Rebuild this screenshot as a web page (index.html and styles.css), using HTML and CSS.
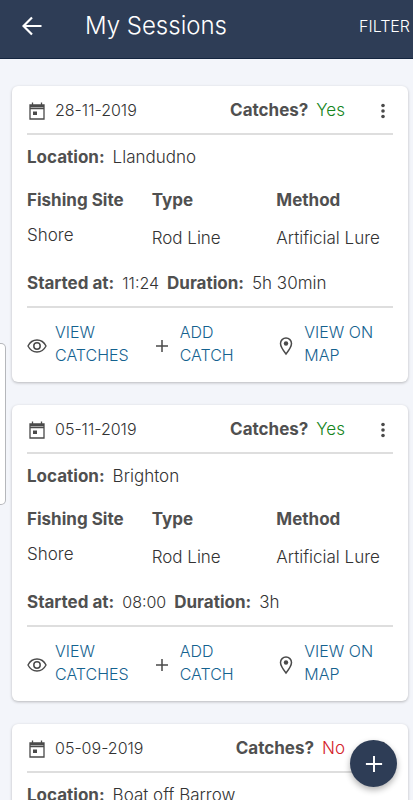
FILE: index.html
```html
<!DOCTYPE html>
<html lang="en">
<head>
<meta charset="utf-8">
<meta name="viewport" content="width=device-width, initial-scale=1">
<title>My Sessions</title>
<link rel="stylesheet" href="styles.css">
</head>
<body>
<svg class="sprite" aria-hidden="true">
  <symbol id="calendar" viewBox="0 0 20 20"><path d="M3 4h14v14H3zM3 5.500h14M3 7.500h14M5.500 1.500V5M14.500 1.500V5" fill="none" stroke="currentColor" stroke-width="1.300"/><path d="M6 10.500h4v3.500H6z" fill="currentColor"/></symbol>
  <symbol id="eye" viewBox="0 0 20 20"><path d="M1 10C3 6 6.300 4 10 4s7 2 9 6c-2 4-5.300 6-9 6s-7-2-9-6z" fill="none" stroke="currentColor" stroke-width="1.400"/><circle cx="10" cy="10" r="3.200" fill="none" stroke="currentColor" stroke-width="1.500"/></symbol>
  <symbol id="plus" viewBox="0 0 20 20"><path d="M10 4v12M4 10h12" fill="none" stroke="currentColor" stroke-width="1.500"/></symbol>
  <symbol id="pin" viewBox="0 0 20 20"><path d="M10 18C7 14.200 4.500 11 4.500 7.500a5.500 5.500 0 0 1 11 0C15.500 11 13 14.200 10 18z" fill="none" stroke="currentColor" stroke-width="1.500"/><circle cx="10" cy="7.500" r="2.200" fill="currentColor"/></symbol>
  <symbol id="dots" viewBox="0 0 20 20"><g fill="currentColor"><circle cx="10" cy="4.500" r="1.800"/><circle cx="10" cy="10" r="1.800"/><circle cx="10" cy="15.500" r="1.800"/></g></symbol>
</svg>

<header class="topbar">
  <button class="back" aria-label="Back"><svg viewBox="0 0 20 20"><path d="M19.500 10H2M10 1.500L1.500 10l8.500 8.500" fill="none" stroke="currentColor" stroke-width="2.200"/></svg></button>
  <h1>My Sessions</h1>
  <button class="filter">FILTER</button>
</header>

<main class="sessions">
  <article class="card">
    <div class="card-head">
      <svg class="icon"><use href="#calendar"/></svg>
      <time datetime="2019-11-28">28-11-2019</time>
      <p class="catches"><b>Catches?</b><span class="yes">Yes</span></p>
      <button class="more" aria-label="More options"><svg class="icon"><use href="#dots"/></svg></button>
    </div>
    <p class="line location"><b>Location:</b><span>Llandudno</span></p>
    <dl class="details">
      <div class="site"><dt>Fishing Site</dt><dd>Shore</dd></div>
      <div><dt>Type</dt><dd>Rod Line</dd></div>
      <div><dt>Method</dt><dd>Artificial Lure</dd></div>
    </dl>
    <p class="line times"><b>Started at:</b><time>11:24</time><b>Duration:</b><span>5h 30min</span></p>
    <nav class="actions">
      <a href="#"><svg class="icon"><use href="#eye"/></svg><span>VIEW<br>CATCHES</span></a>
      <a href="#"><svg class="icon"><use href="#plus"/></svg><span>ADD<br>CATCH</span></a>
      <a href="#"><svg class="icon"><use href="#pin"/></svg><span>VIEW ON<br>MAP</span></a>
    </nav>
  </article>

  <article class="card">
    <div class="card-head">
      <svg class="icon"><use href="#calendar"/></svg>
      <time datetime="2019-11-05">05-11-2019</time>
      <p class="catches"><b>Catches?</b><span class="yes">Yes</span></p>
      <button class="more" aria-label="More options"><svg class="icon"><use href="#dots"/></svg></button>
    </div>
    <p class="line location"><b>Location:</b><span>Brighton</span></p>
    <dl class="details">
      <div class="site"><dt>Fishing Site</dt><dd>Shore</dd></div>
      <div><dt>Type</dt><dd>Rod Line</dd></div>
      <div><dt>Method</dt><dd>Artificial Lure</dd></div>
    </dl>
    <p class="line times"><b>Started at:</b><time>08:00</time><b>Duration:</b><span>3h</span></p>
    <nav class="actions">
      <a href="#"><svg class="icon"><use href="#eye"/></svg><span>VIEW<br>CATCHES</span></a>
      <a href="#"><svg class="icon"><use href="#plus"/></svg><span>ADD<br>CATCH</span></a>
      <a href="#"><svg class="icon"><use href="#pin"/></svg><span>VIEW ON<br>MAP</span></a>
    </nav>
  </article>

  <article class="card">
    <div class="card-head">
      <svg class="icon"><use href="#calendar"/></svg>
      <time datetime="2019-09-05">05-09-2019</time>
      <p class="catches"><b>Catches?</b><span class="no">No</span></p>
      <button class="more" aria-label="More options"><svg class="icon"><use href="#dots"/></svg></button>
    </div>
    <p class="line location"><b>Location:</b><span>Boat off Barrow</span></p>
  </article>
</main>

<div class="edge-handle"></div>
<button class="fab" aria-label="Add session"><svg viewBox="0 0 20 20"><path d="M10 1v18M1 10h18" fill="none" stroke="currentColor" stroke-width="2.200"/></svg></button>
</body>
</html>
```
FILE: styles.css
```css
* { box-sizing: border-box; }

html { scrollbar-width: none; }

body {
  margin: 0;
  background: #f3f5fa;
  color: #333;
  font: 300 17px/24px Inter, sans-serif;
}

h1, p, dl, dd { margin: 0; }

b, dt { font-weight: 700; color: #505050; }

time { font-size: 16px; }

button {
  padding: 0;
  border: 0;
  background: none;
  color: inherit;
  font: inherit;
}

.sprite { position: absolute; width: 0; height: 0; }

.icon {
  display: block;
  flex: none;
  width: 20px;
  height: 20px;
  color: #4a4a4a;
}

.topbar {
  position: sticky;
  top: 0;
  z-index: 2;
  display: flex;
  align-items: center;
  height: 59px;
  padding: 0 3px 6px 22px;
  border-bottom: 1px solid #14253f;
  background: #2e3d56;
  color: #fff;
}

.back svg { display: block; width: 20px; height: 20px; }

.topbar h1 {
  flex: 1;
  margin-left: 43px;
  font-size: 24px;
  font-weight: 300;
  line-height: 28px;
}

.filter { font-size: 16px; }

.sessions {
  display: flex;
  flex-direction: column;
  gap: 23px;
  padding: 27px 5px 24px 12px;
}

.card {
  padding: 0 15px 15px;
  border-radius: 6px;
  background: #fff;
  box-shadow: 0 1px 3px rgba(0, 0, 0, 0.25);
}

.card-head {
  display: flex;
  align-items: center;
  gap: 8px;
  height: 49px;
  border-bottom: 2px solid #dedede;
}
.card-head .icon { margin-top: 3px; }

.catches {
  display: flex;
  gap: 8px;
  margin-left: auto;
}
.yes { color: #16851c; }
.no { color: #d3222a; }
.more { margin-left: 20px; }

.line { display: flex; gap: 8px; }
.location { padding: 10px 0 19px; }

.details {
  display: grid;
  grid-template-columns: repeat(3, 1fr);
  column-gap: 8px;
  white-space: nowrap;
}
.details dd { margin-top: 14px; }
.details .site dd { margin-top: 11px; }

.times {
  padding: 21px 0 11px;
  border-bottom: 2px solid #dedede;
}

.actions {
  display: grid;
  grid-template-columns: repeat(3, 1fr);
  column-gap: 8px;
  padding-top: 13px;
  font-size: 16px;
  line-height: 23px;
}
.actions a {
  display: flex;
  align-items: center;
  gap: 8px;
  color: #14628f;
  text-decoration: none;
  white-space: nowrap;
}
.actions .icon { margin-top: 3px; }

.edge-handle {
  position: fixed;
  top: 343px;
  left: 0;
  width: 6px;
  height: 162px;
  border: 1px solid #b5b7bb;
  border-left: 0;
  border-radius: 0 5px 5px 0;
  background: #fff;
}

.fab {
  position: fixed;
  right: 16px;
  bottom: 13px;
  z-index: 3;
  display: grid;
  place-items: center;
  width: 47px;
  height: 47px;
  border-radius: 50%;
  background: #2e3d56;
  color: #fff;
  box-shadow: 0 3px 6px rgba(0, 0, 0, 0.3);
}
.fab svg { width: 18px; height: 18px; }
```
